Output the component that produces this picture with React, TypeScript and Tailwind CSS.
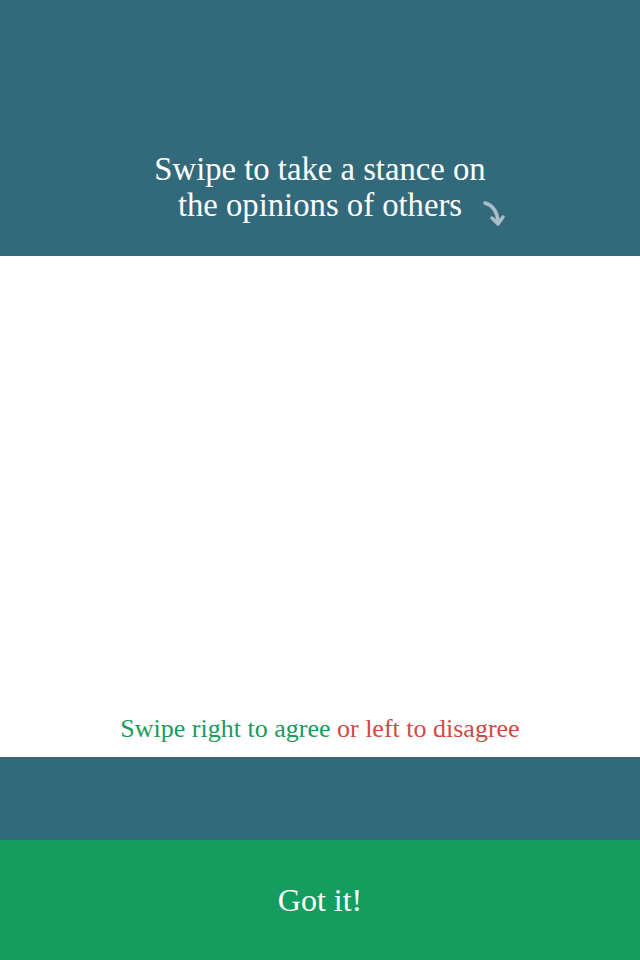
export default function App() {
  return (
    <div
      className="flex h-[960px] w-[640px] flex-col"
      style={{ fontFamily: '"Liberation Serif", "DejaVu Serif", serif' }}
    >
      {/* header */}
      <div className="flex h-[256px] flex-col items-center justify-end bg-[#326a7c] pb-[33px]">
        <p className="relative text-center text-[32.7px] leading-[36px] text-white">
          Swipe to take a stance on
          <br />
          the opinions of others
          <svg
            className="absolute right-[-24px] bottom-[-8px]"
            width="30"
            height="34"
            viewBox="0 0 30 34"
            fill="none"
          >
            <path
              d="M5 6 C 12 8, 17 14, 18 24"
              stroke="#a9bdc6"
              strokeWidth="3.5"
              strokeLinecap="round"
            />
            <path
              d="M12 21 L18 27 L23 20"
              stroke="#a9bdc6"
              strokeWidth="3.5"
              strokeLinecap="round"
              strokeLinejoin="round"
            />
          </svg>
        </p>
      </div>

      {/* card area */}
      <div className="flex flex-1 flex-col items-center justify-end bg-white pb-[13px]">
        <p className="text-[26px] leading-[30px]">
          <span className="text-[#1b9a60]">Swipe right to agree</span>{" "}
          <span className="text-[#d04a43]">or left to disagree</span>
        </p>
      </div>

      <div className="h-[83px] bg-[#326a7c]" />

      {/* action */}
      <button className="flex h-[120px] items-center justify-center bg-[#159d60] text-[32px] text-white">
        Got it!
      </button>
    </div>
  );
}
